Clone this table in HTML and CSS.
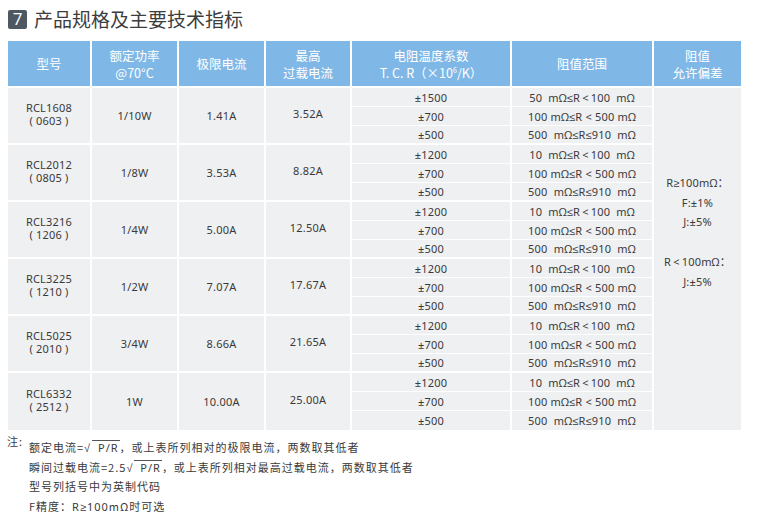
FILE: index.html
```html
<!DOCTYPE html>
<html lang="zh">
<head>
<meta charset="utf-8">
<link rel="stylesheet" href="styles.css">
</head>
<body>
<div class="page">
  <h2 class="title"><span class="num">7</span><span class="title-text">产品规格及主要技术指标</span></h2>
  <table class="spec">
    <colgroup>
      <col class="c1"><col class="c2"><col class="c3"><col class="c4"><col class="c5"><col class="c6"><col class="c7">
    </colgroup>
    <thead>
      <tr>
        <th>型号</th>
        <th>额定功率<br>@70°C</th>
        <th>极限电流</th>
        <th>最高<br>过载电流</th>
        <th>电阻温度系数<br>T. C. R（×10<sup>6</sup>/K）</th>
        <th>阻值范围</th>
        <th class="last">阻值<br>允许偏差</th>
      </tr>
    </thead>
    <tbody>
      <tr>
        <td rowspan="3" class="grp model">RCL1608<br>( 0603 )</td>
        <td rowspan="3" class="grp">1/10W</td>
        <td rowspan="3" class="grp">1.41A</td>
        <td rowspan="3" class="grp up">3.52A</td>
        <td>±1500</td><td>50&nbsp; mΩ≤R&thinsp;&lt;&thinsp;100&nbsp; mΩ</td>
        <td rowspan="18" class="last tol">R≥100mΩ：<br>F:±1%<br>J:±5%<br>&nbsp;<br>R&thinsp;&lt;&thinsp;100mΩ：<br>J:±5%</td>
      </tr>
      <tr><td>±700</td><td>100 mΩ≤R &lt; 500 mΩ</td></tr>
      <tr class="gend"><td>±500</td><td>500&nbsp; mΩ≤R≤910&nbsp; mΩ</td></tr>

      <tr>
        <td rowspan="3" class="grp model">RCL2012<br>( 0805 )</td>
        <td rowspan="3" class="grp">1/8W</td>
        <td rowspan="3" class="grp">3.53A</td>
        <td rowspan="3" class="grp up">8.82A</td>
        <td>±1200</td><td>10&nbsp; mΩ≤R&thinsp;&lt;&thinsp;100&nbsp; mΩ</td>
      </tr>
      <tr><td>±700</td><td>100 mΩ≤R &lt; 500 mΩ</td></tr>
      <tr class="gend"><td>±500</td><td>500&nbsp; mΩ≤R≤910&nbsp; mΩ</td></tr>

      <tr>
        <td rowspan="3" class="grp model">RCL3216<br>( 1206 )</td>
        <td rowspan="3" class="grp">1/4W</td>
        <td rowspan="3" class="grp">5.00A</td>
        <td rowspan="3" class="grp up">12.50A</td>
        <td>±1200</td><td>10&nbsp; mΩ≤R&thinsp;&lt;&thinsp;100&nbsp; mΩ</td>
      </tr>
      <tr><td>±700</td><td>100 mΩ≤R &lt; 500 mΩ</td></tr>
      <tr class="gend"><td>±500</td><td>500&nbsp; mΩ≤R≤910&nbsp; mΩ</td></tr>

      <tr>
        <td rowspan="3" class="grp model">RCL3225<br>( 1210 )</td>
        <td rowspan="3" class="grp">1/2W</td>
        <td rowspan="3" class="grp">7.07A</td>
        <td rowspan="3" class="grp up">17.67A</td>
        <td>±1200</td><td>10&nbsp; mΩ≤R&thinsp;&lt;&thinsp;100&nbsp; mΩ</td>
      </tr>
      <tr><td>±700</td><td>100 mΩ≤R &lt; 500 mΩ</td></tr>
      <tr class="gend"><td>±500</td><td>500&nbsp; mΩ≤R≤910&nbsp; mΩ</td></tr>

      <tr>
        <td rowspan="3" class="grp model">RCL5025<br>( 2010 )</td>
        <td rowspan="3" class="grp">3/4W</td>
        <td rowspan="3" class="grp">8.66A</td>
        <td rowspan="3" class="grp up">21.65A</td>
        <td>±1200</td><td>10&nbsp; mΩ≤R&thinsp;&lt;&thinsp;100&nbsp; mΩ</td>
      </tr>
      <tr><td>±700</td><td>100 mΩ≤R &lt; 500 mΩ</td></tr>
      <tr class="gend"><td>±500</td><td>500&nbsp; mΩ≤R≤910&nbsp; mΩ</td></tr>

      <tr>
        <td rowspan="3" class="grp model lastgrp">RCL6332<br>( 2512 )</td>
        <td rowspan="3" class="grp lastgrp">1W</td>
        <td rowspan="3" class="grp lastgrp">10.00A</td>
        <td rowspan="3" class="grp up lastgrp">25.00A</td>
        <td>±1200</td><td>10&nbsp; mΩ≤R&thinsp;&lt;&thinsp;100&nbsp; mΩ</td>
      </tr>
      <tr><td>±700</td><td>100 mΩ≤R &lt; 500 mΩ</td></tr>
      <tr class="final"><td>±500</td><td>500&nbsp; mΩ≤R≤910&nbsp; mΩ</td></tr>
    </tbody>
  </table>
  <div class="notes">
    <span class="note-label">注:</span>
    <div class="note-lines">
      <p>额定电流=<span class="sym">√</span><span class="rad">&nbsp;P/R</span>，或上表所列相对的极限电流，两数取其低者</p>
      <p>瞬间过载电流=2.5<span class="sym">√</span><span class="rad">&nbsp;P/R</span>，或上表所列相对最高过载电流，两数取其低者</p>
      <p>型号列括号中为英制代码</p>
      <p>F精度：<span class="lat">R≥100</span>mΩ时可选</p>
    </div>
  </div>
</div>
</body>
</html>
```

FILE: styles.css
```css
* { box-sizing: border-box; }
html, body { margin: 0; padding: 0; background: #fff; }
body {
  font-family: "Noto Sans CJK SC", "Noto Sans", sans-serif;
  color: #3a3a3a;
}
.page { padding: 9px 0 0 8px; width: 759px; }
.title {
  display: flex;
  align-items: center;
  gap: 7px;
  margin: 0;
  height: 20px;
  font-weight: normal;
  font-size: 19px;
  color: #3d3d3d;
  line-height: 20px;
}
.num {
  display: inline-flex;
  align-items: center;
  justify-content: center;
  width: 19px;
  height: 19px;
  background: #4d5862;
  color: #fff;
  border-radius: 2px;
  font-size: 17px;
  font-family: "Open Sans", "Noto Sans", sans-serif;
}

.spec {
  margin-top: 12px;
  width: 733px;
  table-layout: fixed;
  border-collapse: separate;
  border-spacing: 0;
  font-size: 11px;
}
.c1 { width: 84px; } .c2 { width: 87px; } .c3 { width: 87px; } .c4 { width: 86px; }
.c5 { width: 160px; } .c6 { width: 142px; } .c7 { width: 87px; }

.spec th {
  background: #7fb8e6;
  color: #fff;
  font-weight: normal;
  font-size: 12.5px;
  line-height: 17px;
  height: 47px;
  padding: 0;
  border-right: 2px solid #fff;
  border-bottom: 2px solid #fff;
  text-align: center;
  vertical-align: middle;
}
.spec th sup { font-size: 7px; vertical-align: 5px; line-height: 0; }
.spec tbody tr { height: 19px; }
.spec td {
  font-family: "Noto Sans", "Liberation Sans", "Noto Sans CJK SC", sans-serif;
  background: #eff0f2;
  height: 19px;
  padding: 0;
  line-height: 15px;
  text-align: center;
  vertical-align: middle;
  border-right: 2px solid #fff;
  border-bottom: 1px solid #fff;
  white-space: nowrap;
  color: #3a3a3a;
  letter-spacing: 0.2px;
}
.spec .last { border-right: 0; }
.spec td.grp { border-bottom: 2px solid #fff; line-height: 13px; }
.spec td.model { padding-bottom: 4px; }
.spec td.up { padding-bottom: 5px; }
.spec tr.gend td { border-bottom: 2px solid #fff; height: 18px; }
.spec td.lastgrp, .spec tr.final td { border-bottom: 0; }
.spec td.tol {
  vertical-align: top;
  padding-top: 85px;
  line-height: 19.7px;
  border-bottom: 0;
}

.notes {
  display: flex;
  margin-top: 8px;
  font-size: 11px;
  color: #3a3a3a;
}
.note-label { width: 22px; margin-left: -1px; margin-top: -5px; letter-spacing: 1px; }
.note-lines p {
  margin: 0;
  line-height: 19.5px;
  letter-spacing: 1px;
}
.sym, .lat { font-family: "Noto Sans", "Liberation Sans", sans-serif; }
.rad {
  display: inline-block;
  border-top: 1px solid #555;
  line-height: 13px;
  padding: 0 1px 0 2px;
  margin-left: 1px;
  font-family: "Noto Sans", sans-serif;
}
```
